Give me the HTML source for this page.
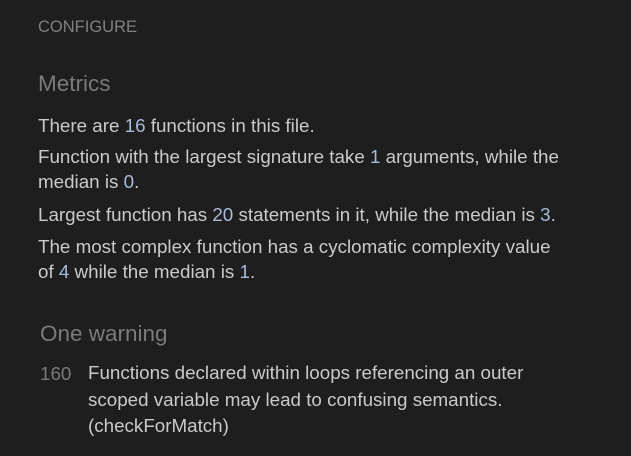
<!DOCTYPE html>
<html><head><style>
body{margin:0;background:#1e1e1e;width:631px;height:456px;overflow:hidden;font-family:"Liberation Sans",Arial,sans-serif;color:#cacaca;position:relative}
.a{position:absolute;white-space:nowrap}
.n{color:#a8bbd9}
.cfg{left:38px;top:18px;font-size:16.5px;color:#808080}
h2{margin:0;font-weight:normal;font-size:22.5px;color:#7a7a7a;position:absolute}
p{margin:0;position:absolute;left:38px;font-size:18.8px;line-height:25px;width:590px}
</style></head><body>
<div class="a cfg">CONFIGURE</div>
<h2 style="left:38px;top:71px">Metrics</h2>
<p style="top:113px">There are <span class="n">16</span> functions in this file.</p>
<p style="top:144px">Function with the largest signature take <span class="n">1</span> arguments, while the<br>median is <span class="n">0</span>.</p>
<p style="top:202px">Largest function has <span class="n">20</span> statements in it, while the median is <span class="n">3</span>.</p>
<p style="top:234px">The most complex function has a cyclomatic complexity value<br>of <span class="n">4</span> while the median is <span class="n">1</span>.</p>
<h2 style="left:40px;top:321px">One warning</h2>
<p style="top:361px;left:40px;color:#7a7a7a;line-height:26px">160</p>
<p style="top:360px;left:88px;line-height:26.5px;width:540px">Functions declared within loops referencing an outer<br>scoped variable may lead to confusing semantics.<br>(checkForMatch)</p>
</body></html>
